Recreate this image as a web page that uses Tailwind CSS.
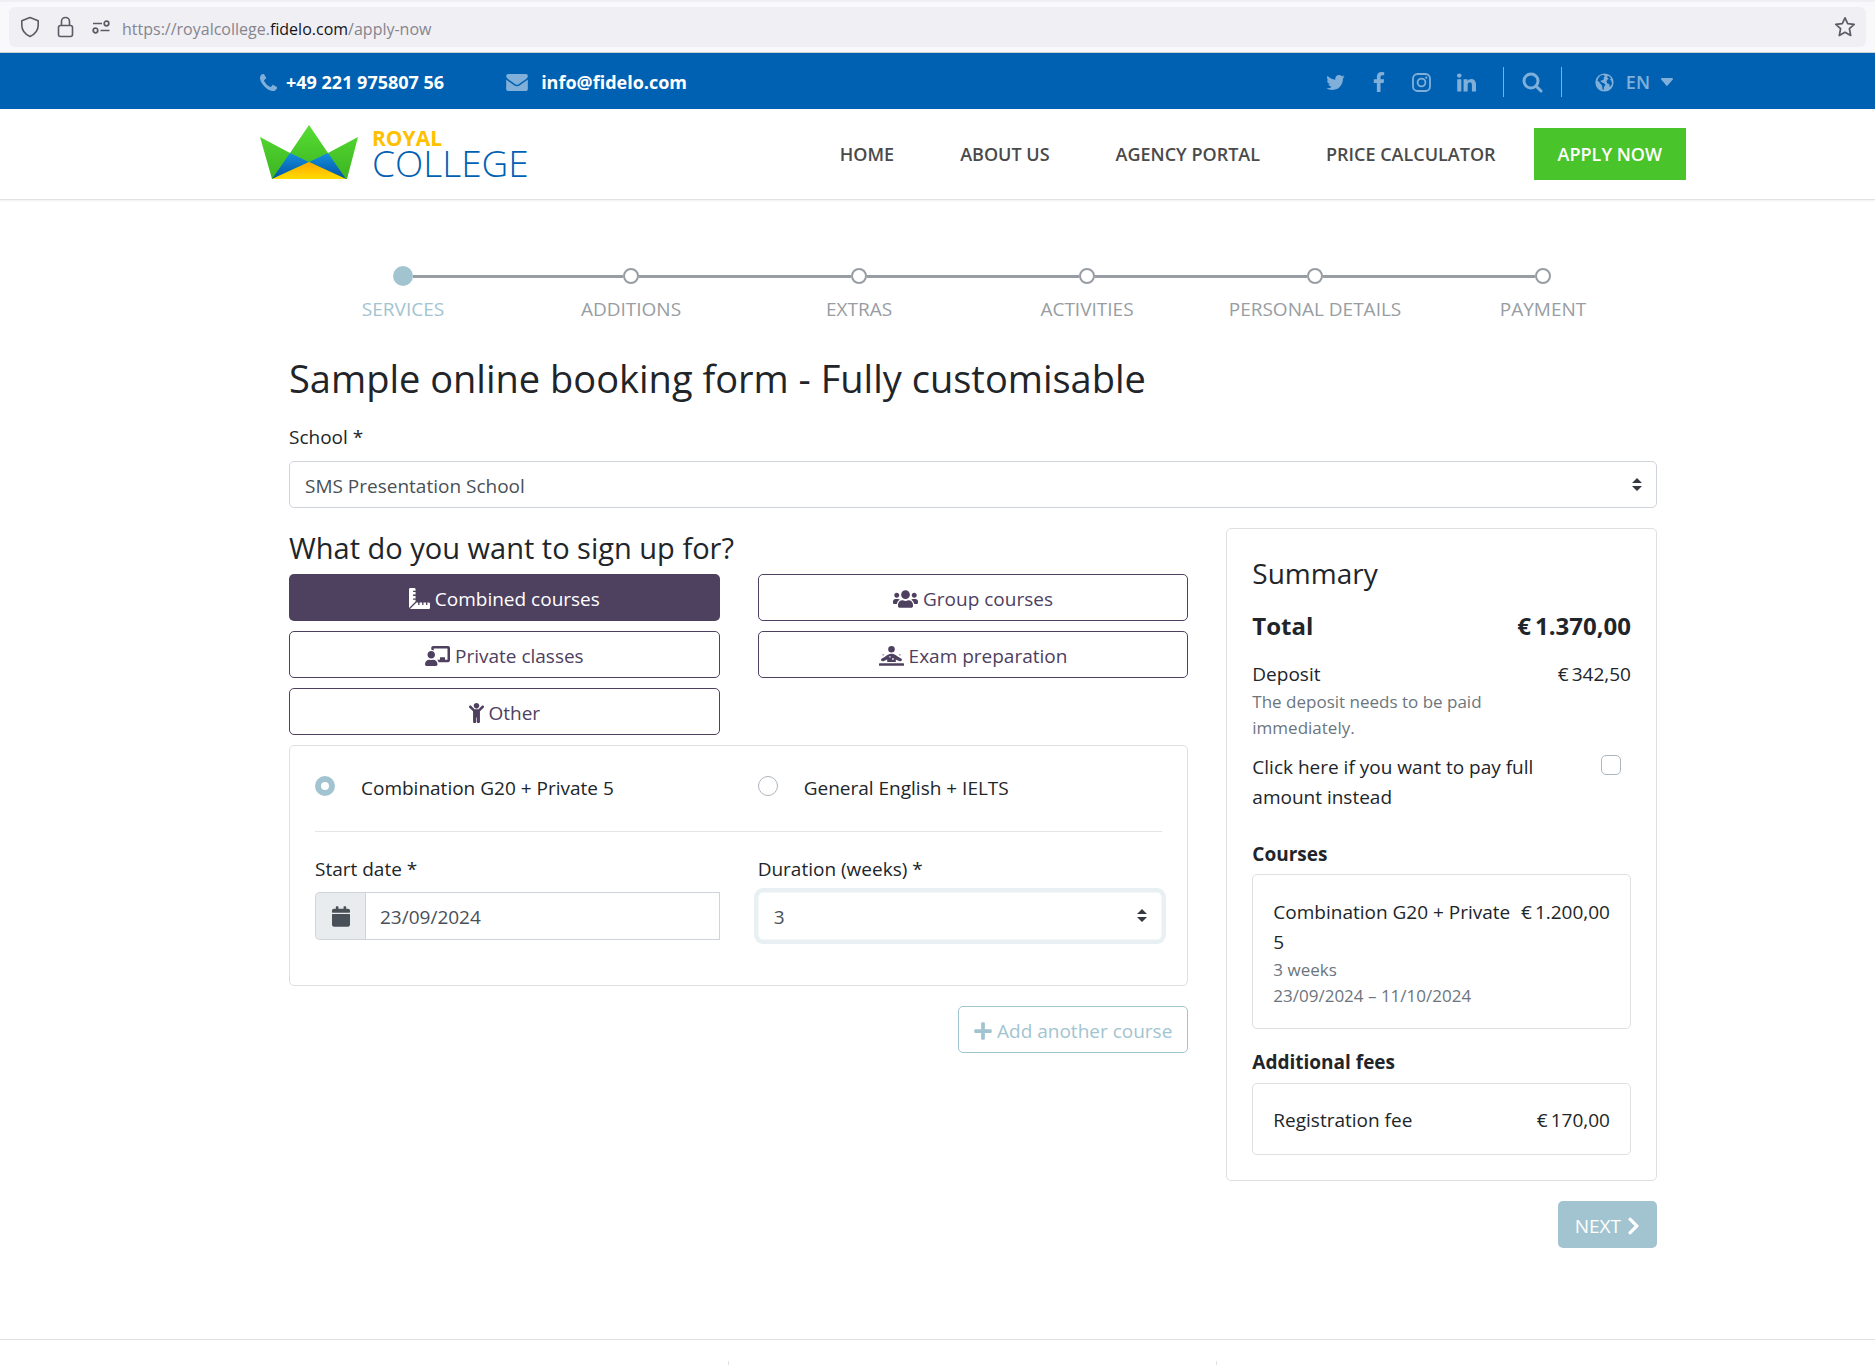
<!DOCTYPE html>
<html lang="en">
<head>
  <meta charset="UTF-8">
  <meta name="viewport" content="width=device-width, initial-scale=1.0">
  <title>Royal College - Apply now</title>
  <script src="https://cdn.jsdelivr.net/npm/@tailwindcss/browser@4"></script>
</head>
<body class="bg-white font-['Open_Sans',sans-serif] text-[#212529]">

  <!-- Address bar -->
  <div class="border-t-2 border-b border-t-[#f0f0f4] border-b-[#ccd0d0] bg-[#f9f9fb] px-[9px] pt-[5px] pb-[5px]">
    <div class="flex h-10 items-center rounded-md bg-[#f0eff4] px-[11px] text-[#5b5b66]">
      <svg class="mr-[17px] h-6 w-5" viewBox="0 0 20 24" fill="none" stroke="currentColor" stroke-width="1.6" stroke-linejoin="round"><path d="M10 2.5 18.2 5.8v4.4c0 5-3 8.800-8.200 11.300-5.200-2.500-8.200-6.300-8.200-11.300V5.800z"/></svg>
      <svg class="mr-[17px] h-6 w-[18px]" viewBox="0 0 18 24" fill="none" stroke="currentColor" stroke-width="1.6"><rect x="1.500" y="10.500" width="14" height="11" rx="2"/><path d="M4.500 10.500V6.500a4 4 0 0 1 8 0v4"/></svg>
      <svg class="mr-3 h-6 w-[18px]" viewBox="0 0 18 24" fill="none" stroke="currentColor" stroke-width="1.700"><path d="M1 8.500h9M8.500 15.500h9"/><circle cx="14.500" cy="8.500" r="2.300"/><circle cx="3.500" cy="15.500" r="2.300"/></svg>
      <p class="flex-1 pt-[3px] text-base text-[#85858d]">https://royalcollege.<span class="text-[#15141a]">fidelo.com</span>/apply-now</p>
      <button type="button" aria-label="Bookmark"><svg class="size-6" viewBox="0 0 24 24" fill="none" stroke="currentColor" stroke-width="1.700" stroke-linejoin="round"><path d="M14 2.800l2.700 5.900 6.500.700-4.800 4.300 1.300 6.800L14 17.300l-5.700 3.200 1.300-6.800-4.800-4.300 6.500-.700z"/></svg></button>
    </div>
  </div>

  <!-- Top bar -->
  <div class="bg-[#0061b3] pl-[71px]">
    <div class="mx-auto flex h-14 max-w-[1426px] items-center pt-[2px] text-[18px] font-bold text-white">
      <a href="tel:+4922197580756" class="flex items-center gap-[9px]">
        <svg class="size-[17px] fill-[#80b0d9]" viewBox="0 128 1408 1408"><path d="M1408 1240q0 27-10 70.5t-20.5 68.500q-21 50-122 106-94 51-186 51-27 0-52.500-3.500t-57.500-12.500-47.500-14.500-55.500-20.500-49-18q-98-35-175-83-128-79-264.500-215.500t-215.500-264.500q-48-77-83-175-3-9-18-49t-20.500-55.500-14.500-47.500-12.500-57.500-3.500-52.500q0-92 51-186 56-101 106-122 25-10 68.500-20.500t70.500-10.500q14 0 21 3 18 6 53 76 11 19 30 54t35 63.500 31 53.500q3 4 17.500 25t21.500 35.500 7 28.500q0 20-28.500 50t-62 55-62 53-28.500 46q0 9 5 22.500t8.500 20.500 14 24 11.500 19q76 137 174 235t235 174q2 1 19 11.500t24 14 20.500 8.500 22.500 5q18 0 46-28.500t53-62 55-62 50-28.500q14 0 28.500 7t35.500 21.500 25 17.500q25 15 53.500 31t63.500 35 54 30q70 35 76 53 3 7 3 21z"/></svg>
        +49 221 975807 56
      </a>
      <a href="mailto:info@fidelo.com" class="ml-[62px] flex items-center gap-[13px]">
        <svg class="h-[17px] w-[22px] fill-[#80b0d9]" viewBox="0 256 1792 1408"><path d="M1792 710v794q0 66-47 113t-113 47h-1472q-66 0-113-47t-47-113v-794q44 49 101 87 362 246 497 345 57 42 92.500 65.500t94.500 48 110 24.500h2q51 0 110-24.500t94.500-48 92.500-65.500q170-123 498-345 57-39 100-87zm0-294q0 79-49 151t-122 123q-376 261-468 325-10 7-42.500 31t-54 38.500-52 32.500-57.500 27-50 9h-2q-23 0-50-9t-57.500-27-52-32.500-54-38.500-42.500-31q-91-64-262-182.500t-205-142.500q-62-42-117-115.500t-55-136.500q0-78 41.500-130t118.500-52h1472q65 0 112.500 47t47.500 113z"/></svg>
        info@fidelo.com
      </a>
      <div class="ml-auto flex items-center text-[#80b0d9]">
        <a href="#" aria-label="Twitter" class="mr-[27px]"><svg class="size-[21px] fill-current" viewBox="0 0 1792 1792"><path d="M1684 408q-67 98-162 167 1 14 1 42 0 130-38 259.500t-115.500 248.500-184.500 210.500-258 146-323 54.500q-271 0-496-145 35 4 78 4 225 0 401-138-105-2-188-64.500t-114-159.500q33 5 61 5 43 0 85-11-112-23-185.500-111.500t-73.500-205.500v-4q68 38 146 41-66-44-105-115t-39-154q0-88 44-163 121 149 294.500 238.500t371.500 99.500q-8-38-8-74 0-134 94.500-228.500t228.500-94.500q140 0 236 102 109-21 205-78-37 115-142 178 93-10 186-50z"/></svg></a>
        <a href="#" aria-label="Facebook" class="mr-[27px]"><svg class="h-5 w-3 fill-current" viewBox="479 0 864 1664"><path d="M1343 12v264h-157q-86 0-116 36t-30 108v189h293l-39 296h-254v759h-306v-759h-255v-296h255v-218q0-186 104-288.500t277-102.500q147 0 228 12z"/></svg></a>
        <a href="#" aria-label="Instagram" class="mr-[26px]"><svg class="size-[19px]" viewBox="0 0 19 19" fill="none" stroke="currentColor" stroke-width="1.800"><rect x="1" y="1" width="17" height="17" rx="4.500"/><circle cx="9.500" cy="9.500" r="3.900"/><circle cx="14.300" cy="4.700" r="1.100" fill="currentColor" stroke="none"/></svg></a>
        <a href="#" aria-label="LinkedIn"><svg class="size-[19px] fill-current" viewBox="128 130 1536 1500"><path d="M477 625v991h-330v-991h330zm21-306q1 73-50.500 122t-135.500 49h-2q-82 0-132-49t-50-122q0-74 51.500-122.500t134.500-48.500 133 48.500 51 122.500zm1166 729v568h-329v-530q0-105-40.500-164.500t-126.500-59.500q-63 0-105.500 34.500t-63.500 85.500q-11 30-11 81v553h-329q2-399 2-647t-1-296l-1-48h329v144h-2q20-32 41-56t56.500-52 87-43.500 114.500-15.500q171 0 275 113.500t104 332.500z"/></svg></a>
        <button type="button" aria-label="Search" class="ml-[27px] flex h-[30px] items-center border-x border-[#80b0d9] px-[18px]"><svg class="size-[21px]" viewBox="0 0 21 21" fill="none" stroke="currentColor" stroke-width="3"><circle cx="9" cy="9" r="7"/><path d="M14 14l5 5" stroke-linecap="round"/></svg></button>
        <button type="button" class="mr-[13px] ml-[33px] flex items-center text-[18px] font-semibold">
          <svg class="mr-3 size-[19px]" viewBox="0 0 20 20"><circle cx="10" cy="10" r="9.600" fill="currentColor"/><path d="M6 2.500 9 2l1.500 1.500L9 5l.5 1.500L7 8l-1.500.5L7.500 10l2.500 1 1 1.500-1.500 2L9 18l-1-.5-.500-4L5.500 11 4 9 2.500 8.500C3 6 4 4 6 2.500zM13 3l2 .5 2 2.500-1.500 1L17 8l1 3-1.500 3-1 .5-.5-3-2-.5-1-2 1-2 1.500-1L13 5z" fill="#0061b3"/></svg>
          EN
          <svg class="ml-[11px] h-2 w-3 fill-current" viewBox="0 0 12 8"><path d="M1 0h10a1 1 0 0 1 .8 1.600L6.600 7.600a1 1 0 0 1-1.300 0L.2 1.600A1 1 0 0 1 1 0z"/></svg>
        </button>
      </div>
    </div>
  </div>

  <!-- Header -->
  <header class="border-b border-[#e2e2e4] pl-[71px] shadow-[0_1px_2px_#0000000f]">
    <div class="mx-auto flex h-[90px] max-w-[1426px] items-center">
      <a href="#" class="mb-1 flex items-center">
        <svg class="h-[54px] w-[98px]" viewBox="0 0 98 54">
          <defs>
            <linearGradient id="green" x1="0" y1="0" x2="0" y2="1"><stop offset="0" stop-color="#56dd33"/><stop offset="1" stop-color="#3db421"/></linearGradient>
            <linearGradient id="blue" x1="0" y1="0" x2="0" y2="1"><stop offset="0" stop-color="#1590dd"/><stop offset="1" stop-color="#0052a5"/></linearGradient>
            <linearGradient id="gold" x1="0" y1="0" x2="0" y2="1"><stop offset="0" stop-color="#ffa500"/><stop offset="1" stop-color="#ffdd00"/></linearGradient>
          </defs>
          <path fill="url(#green)" d="M0 12 30 28 49 0l19 28 30-16-11 42H12z"/>
          <path fill="url(#blue)" d="M30 28 12 54l37-17 37 17-18-26-19 9z"/>
          <path fill="url(#gold)" d="M12 54 49 37l37 17z"/>
        </svg>
        <span class="ml-[14px] block">
          <span class="block text-[21px] leading-[21px] font-bold text-[#ffc000]">ROYAL</span>
          <span class="block text-[37px] leading-7 font-light text-[#0061b3]">COLLEGE</span>
        </span>
      </a>
      <nav class="ml-auto flex items-center text-[18px] font-semibold text-[#4a4a4a]">
        <a href="#" class="mr-[66px]">HOME</a>
        <a href="#" class="mr-[66px]">ABOUT US</a>
        <a href="#" class="mr-[66px]">AGENCY PORTAL</a>
        <a href="#" class="mr-[38px]">PRICE CALCULATOR</a>
        <a href="#" class="flex h-[52px] items-center bg-[#49c42b] px-6 text-white">APPLY NOW</a>
      </nav>
    </div>
  </header>

  <main class="pl-[71px]">
    <div class="mx-auto max-w-[1368px] pt-[66px] text-[19px] leading-[30px]">
      <!-- Steps -->
      <ol class="grid grid-cols-6 text-center text-[#979da2]">
        <li class="text-[#a2c4d0]">
          <div class="mb-2 flex h-5 items-center"><span class="flex-1"></span><span class="size-5 rounded-full bg-[#a2c4d0]"></span><span class="h-[3px] flex-1 bg-[#979da2]"></span></div>
          SERVICES
        </li>
        <li>
          <div class="mb-2 flex h-5 items-center"><span class="h-[3px] flex-1 bg-[#979da2]"></span><span class="size-4 rounded-full border-2 border-[#979da2]"></span><span class="h-[3px] flex-1 bg-[#979da2]"></span></div>
          ADDITIONS
        </li>
        <li>
          <div class="mb-2 flex h-5 items-center"><span class="h-[3px] flex-1 bg-[#979da2]"></span><span class="size-4 rounded-full border-2 border-[#979da2]"></span><span class="h-[3px] flex-1 bg-[#979da2]"></span></div>
          EXTRAS
        </li>
        <li>
          <div class="mb-2 flex h-5 items-center"><span class="h-[3px] flex-1 bg-[#979da2]"></span><span class="size-4 rounded-full border-2 border-[#979da2]"></span><span class="h-[3px] flex-1 bg-[#979da2]"></span></div>
          ACTIVITIES
        </li>
        <li>
          <div class="mb-2 flex h-5 items-center"><span class="h-[3px] flex-1 bg-[#979da2]"></span><span class="size-4 rounded-full border-2 border-[#979da2]"></span><span class="h-[3px] flex-1 bg-[#979da2]"></span></div>
          PERSONAL DETAILS
        </li>
        <li>
          <div class="mb-2 flex h-5 items-center"><span class="h-[3px] flex-1 bg-[#979da2]"></span><span class="size-4 rounded-full border-2 border-[#979da2]"></span><span class="flex-1"></span></div>
          PAYMENT
        </li>
      </ol>

      <form>
        <h1 class="mt-[30px] mb-5 text-[38px] leading-12">Sample online booking form - Fully customisable</h1>

        <label for="school" class="mb-[9px] block">School *</label>
        <div class="relative">
          <select id="school" class="block h-[47px] w-full appearance-none rounded-[5px] border border-[#ced4da] bg-white px-[15px] pt-[2px] text-[#495057]">
            <option>SMS Presentation School</option>
          </select>
          <svg class="pointer-events-none absolute top-[17px] right-[15px] h-[13px] w-[10px] fill-[#343a40]" viewBox="0 0 10 13"><path d="M0 5 5 0l5 5zM0 8l5 5 5-5z"/></svg>
        </div>

        <div class="mt-5 grid grid-cols-3 items-start gap-[38px]">
          <div class="col-span-2">
            <h2 class="pt-[2px] pb-2 text-[29px] leading-9">What do you want to sign up for?</h2>
            <div class="grid grid-cols-2 gap-x-[38px] gap-y-[10px] text-[#4e405f]">
              <button type="button" class="flex h-[47px] items-center justify-center gap-[5px] rounded-[5px] bg-[#4e405f] pt-[2px] text-white">
                <svg class="h-[21px] w-[21px] fill-current" viewBox="0 0 512 512"><path d="M160 288h-56c-4.420 0-8-3.580-8-8v-16c0-4.420 3.580-8 8-8h56v-64h-56c-4.420 0-8-3.580-8-8v-16c0-4.420 3.580-8 8-8h56V96h-56c-4.420 0-8-3.580-8-8V72c0-4.420 3.580-8 8-8h56V32c0-17.670-14.330-32-32-32H32C14.330 0 0 14.330 0 32v448c0 2.770.91 5.240 1.570 7.800L160 329.380V288zm320 64h-32v56c0 4.420-3.580 8-8 8h-16c-4.420 0-8-3.580-8-8v-56h-64v56c0 4.420-3.580 8-8 8h-16c-4.420 0-8-3.580-8-8v-56h-64v56c0 4.420-3.580 8-8 8h-16c-4.420 0-8-3.580-8-8v-56h-41.370L24.200 510.430c2.560.66 5.040 1.570 7.800 1.570h448c17.670 0 32-14.330 32-32v-96c0-17.670-14.330-32-32-32z"/></svg>
                Combined courses
              </button>
              <button type="button" class="flex h-[47px] items-center justify-center gap-[5px] rounded-[5px] border border-[#4e405f] pt-[2px]">
                <svg class="h-5 w-[25px] fill-current" viewBox="0 0 640 512"><path d="M96 224c35.300 0 64-28.700 64-64s-28.700-64-64-64-64 28.700-64 64 28.700 64 64 64zm448 0c35.300 0 64-28.700 64-64s-28.700-64-64-64-64 28.700-64 64 28.700 64 64 64zm32 32h-64c-17.600 0-33.500 7.100-45.100 18.600 40.300 22.100 68.900 62 75.100 109.400h66c17.700 0 32-14.300 32-32v-32c0-35.300-28.700-64-64-64zm-256 0c61.900 0 112-50.100 112-112S381.900 32 320 32 208 82.100 208 144s50.100 112 112 112zm76.800 32h-8.300c-20.800 10-43.900 16-68.500 16s-47.600-6-68.500-16h-8.300C179.600 288 128 339.600 128 403.200V432c0 26.500 21.500 48 48 48h288c26.500 0 48-21.500 48-48v-28.800c0-63.600-51.600-115.200-115.200-115.200zm-223.700-13.400C161.500 263.100 145.600 256 128 256H64c-35.300 0-64 28.700-64 64v32c0 17.700 14.300 32 32 32h65.900c6.300-47.400 34.900-87.300 75.200-109.400z"/></svg>
                Group courses
              </button>
              <button type="button" class="flex h-[47px] items-center justify-center gap-[5px] rounded-[5px] border border-[#4e405f] pt-[2px]">
                <svg class="h-5 w-[25px] fill-current" viewBox="0 0 640 512"><path d="M208 352c-2.390 0-4.780.35-7.060 1.090C187.980 357.300 174.350 360 160 360c-14.350 0-27.980-2.700-40.950-6.910-2.280-.74-4.660-1.090-7.050-1.090C49.940 352-.33 402.480 0 464.620.14 490.880 21.730 512 48 512h224c26.270 0 47.860-21.120 48-47.380.33-62.140-49.940-112.620-112-112.620zm-48-32c53.020 0 96-42.980 96-96s-42.980-96-96-96-96 42.980-96 96 42.980 96 96 96zM592 0H208c-26.470 0-48 22.250-48 49.590V96c23.420 0 45.100 6.780 64 17.800V64h352v288h-64v-64H384v64h-76.240c19.100 16.690 33.120 38.730 39.690 64H592c26.470 0 48-22.250 48-49.590V49.590C640 22.250 618.470 0 592 0z"/></svg>
                Private classes
              </button>
              <button type="button" class="flex h-[47px] items-center justify-center gap-[5px] rounded-[5px] border border-[#4e405f] pt-[2px]">
                <svg class="h-5 w-[25px] fill-current" viewBox="0 0 640 512"><circle cx="320" cy="84" r="84"/><rect y="440" width="640" height="66" rx="16"/><path fill-rule="evenodd" d="M210 412v-66l-95 42c-45 18-85-30-52-60l80-46c60-46 110-86 177-86s117 40 177 86l80 46c33 30-7 78-52 60l-95-42v66zM262 262h34v34h-34zm74 50h40v40h-40z"/><circle cx="105" cy="226" r="18"/><circle cx="535" cy="226" r="18"/></svg>
                Exam preparation
              </button>
              <button type="button" class="flex h-[47px] items-center justify-center gap-[5px] rounded-[5px] border border-[#4e405f] pt-[2px]">
                <svg class="h-5 w-[15px] fill-current" viewBox="0 0 384 512"><path d="M120 72c0-39.765 32.235-72 72-72s72 32.235 72 72c0 39.764-32.235 72-72 72s-72-32.236-72-72zm254.627 1.373c-12.496-12.497-32.758-12.497-45.254 0L242.745 160H141.254L54.627 73.373c-12.496-12.497-32.758-12.497-45.254 0-12.497 12.497-12.497 32.758 0 45.255L104 213.254V480c0 17.673 14.327 32 32 32h16c17.673 0 32-14.327 32-32V368h16v112c0 17.673 14.327 32 32 32h16c17.673 0 32-14.327 32-32V213.254l94.627-94.627c12.497-12.496 12.497-32.757 0-45.254z"/></svg>
                Other
              </button>
            </div>

            <!-- Course details -->
            <div class="mt-[10px] rounded-[5px] border border-[#dfdfdf] px-[25px] pt-[27px] pb-[45px]">
              <div class="grid grid-cols-2 gap-x-[38px]">
                <label class="flex items-start gap-[26px]"><input type="radio" name="course" checked class="mt-[3px] size-5 appearance-none rounded-full border border-[#adb5bd] checked:border-[6px] checked:border-[#a2c4d0]">Combination G20 + Private 5</label>
                <label class="flex items-start gap-[26px]"><input type="radio" name="course" class="mt-[3px] size-5 appearance-none rounded-full border border-[#adb5bd] checked:border-[6px] checked:border-[#a2c4d0]">General English + IELTS</label>
              </div>
              <hr class="mt-7 mb-[22px] border-[#e5e5e5]">
              <div class="grid grid-cols-2 gap-x-[38px]">
                <div>
                  <label for="start" class="mb-2 block">Start date *</label>
                  <div class="flex h-12">
                    <span class="flex w-[50px] items-center justify-center rounded-l-[5px] border border-r-0 border-[#ced4da] bg-[#e9ecef] text-[#495057]"><svg class="h-[21px] w-[18px] fill-current" viewBox="0 0 448 512"><path d="M12 192h424c6.600 0 12 5.400 12 12v260c0 26.500-21.500 48-48 48H48c-26.500 0-48-21.500-48-48V204c0-6.600 5.400-12 12-12zm436-44v-36c0-26.500-21.500-48-48-48h-48V12c0-6.600-5.400-12-12-12h-40c-6.600 0-12 5.400-12 12v52H160V12c0-6.600-5.400-12-12-12h-40c-6.600 0-12 5.400-12 12v52H48C21.500 64 0 85.500 0 112v36c0 6.600 5.400 12 12 12h424c6.600 0 12-5.400 12-12z"/></svg></span>
                    <input id="start" type="text" value="23/09/2024" class="min-w-0 flex-1 border border-[#ced4da] px-[14px] pt-[2px] text-[#495057]">
                  </div>
                </div>
                <div>
                  <label for="duration" class="mb-2 block">Duration (weeks) *</label>
                  <div class="relative">
                    <select id="duration" class="block h-12 w-full appearance-none rounded-[5px] border border-[#f2f7f9] bg-white px-[15px] pt-[2px] text-[#495057] ring-4 ring-[#e8f0f3]">
                      <option>3</option>
                    </select>
                    <svg class="pointer-events-none absolute top-[17px] right-[15px] h-[13px] w-[10px] fill-[#343a40]" viewBox="0 0 10 13"><path d="M0 5 5 0l5 5zM0 8l5 5 5-5z"/></svg>
                  </div>
                </div>
              </div>
            </div>

            <button type="button" class="mt-5 ml-auto flex h-[47px] items-center gap-[5px] rounded-[5px] border border-[#a2c4d0] px-[15px] pt-[2px] text-[#a2c4d0]">
              <svg class="h-5 w-[18px] fill-current" viewBox="0 0 448 512"><path d="M416 208H272V64c0-17.670-14.330-32-32-32h-32c-17.670 0-32 14.330-32 32v144H32c-17.670 0-32 14.330-32 32v32c0 17.670 14.330 32 32 32h144v144c0 17.670 14.330 32 32 32h32c17.670 0 32-14.330 32-32V304h144c17.670 0 32-14.330 32-32v-32c0-17.670-14.330-32-32-32z"/></svg>
              Add another course
            </button>
          </div>

          <!-- Summary -->
          <div>
            <aside class="rounded-[5px] border border-[#dfdfdf] p-[25px]">
              <h2 class="pt-px text-[28px] leading-9">Summary</h2>
              <div class="mt-[17px] flex justify-between text-[24px] leading-9 font-bold"><span>Total</span><span>€&thinsp;1.370,00</span></div>
              <div class="mt-[15px] flex justify-between"><span>Deposit</span><span>€&thinsp;342,50</span></div>
              <p class="max-w-[270px] text-[17px] leading-[26px] text-[#6c757d]">The deposit needs to be paid immediately.</p>
              <div class="mt-[11px] flex justify-between">
                <label for="full" class="max-w-[300px]">Click here if you want to pay full amount instead</label>
                <input id="full" type="checkbox" class="mt-[3px] mr-[10px] size-5 shrink-0 appearance-none rounded-[5px] border border-[#adb5bd]">
              </div>

              <h3 class="mt-[27px] mb-[5px] font-bold">Courses</h3>
              <div class="rounded-[5px] border border-[#dfdfdf] px-5 pt-[22px] pb-[19px]">
                <div class="flex justify-between gap-2"><span>Combination G20 + Private 5</span><span class="whitespace-nowrap">€&thinsp;1.200,00</span></div>
                <p class="text-[17px] leading-[26px] text-[#6c757d]">3 weeks<br>23/09/2024 – 11/10/2024</p>
              </div>

              <h3 class="mt-[18px] mb-[6px] font-bold">Additional fees</h3>
              <div class="flex justify-between rounded-[5px] border border-[#dfdfdf] px-5 pt-[21px] pb-[19px]"><span>Registration fee</span><span>€&thinsp;170,00</span></div>
            </aside>

            <button type="submit" class="mt-5 ml-auto flex h-[47px] items-center gap-[6px] rounded-[5px] bg-[#a2c4d0] px-[17px] pt-[2px] text-white">
              NEXT
              <svg class="h-5 w-[13px] fill-current" viewBox="0 0 320 512"><path d="M285.476 272.971L91.132 467.314c-9.373 9.373-24.569 9.373-33.941 0l-22.667-22.667c-9.357-9.357-9.375-24.522-.04-33.901L188.505 256 34.484 101.255c-9.335-9.379-9.317-24.544.04-33.901l22.667-22.667c9.373-9.373 24.569-9.373 33.941 0L285.475 239.030c9.373 9.372 9.373 24.568.001 33.941z"/></svg>
            </button>
          </div>
        </div>
      </form>
    </div>
  </main>

  <footer class="mt-[91px] border-t border-[#e0e3e5] pt-[21px] pl-[71px]">
    <div class="mx-auto grid max-w-[1462px] grid-cols-3 divide-x divide-[#e0e3e5]">
      <div class="h-1"></div>
      <div class="h-1"></div>
      <div class="h-1"></div>
    </div>
  </footer>
</body>
</html>
